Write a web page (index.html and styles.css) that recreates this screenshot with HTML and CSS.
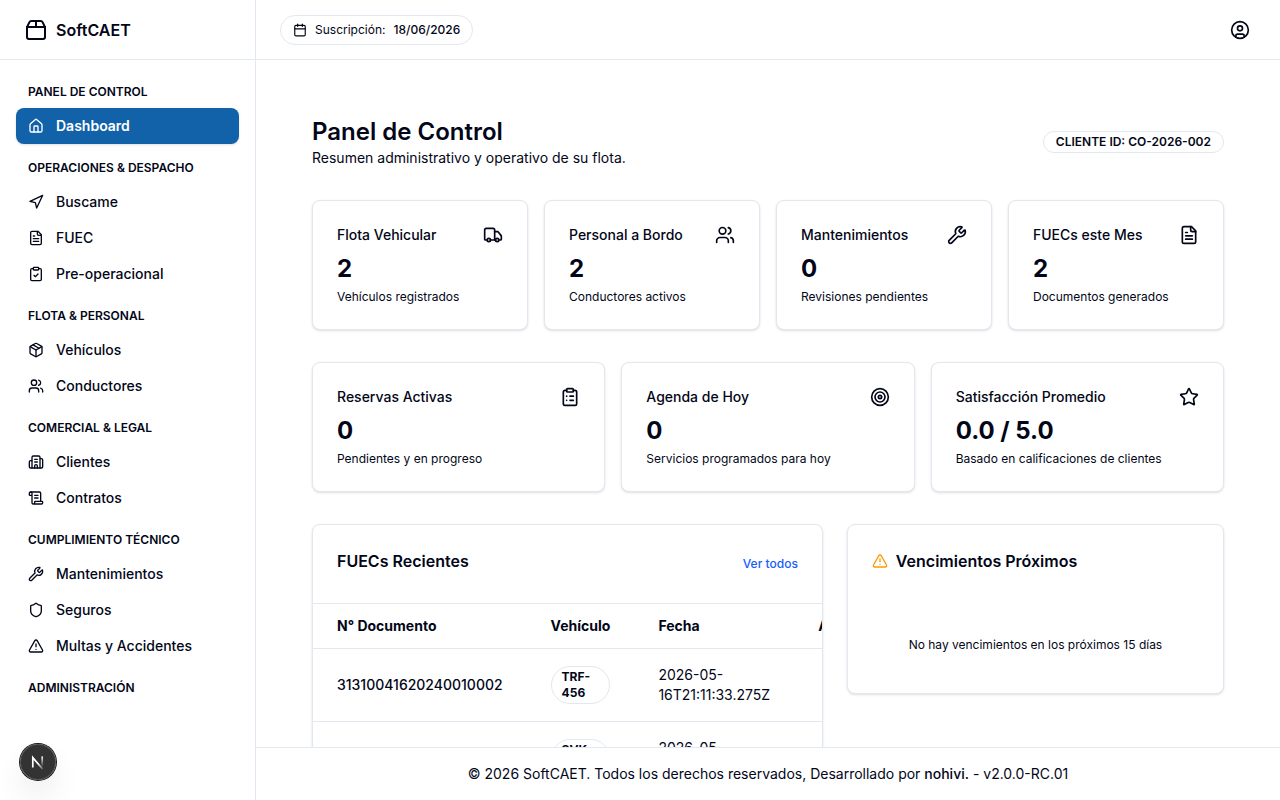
FILE: index.html
```html
<!DOCTYPE html>
<html lang="es">
<head>
    <meta charset="UTF-8">
    <meta name="viewport" content="width=device-width, initial-scale=1.0">
    <title>SoftCAET - Panel de Control</title>
    <link rel="stylesheet" href="styles.css">
</head>
<body>
    <!-- icons -->
    <svg class="sprite" aria-hidden="true">
        <symbol id="i-package" viewBox="0 0 24 24">
            <path d="M12 3v6"/>
            <path d="M16.76 3a2 2 0 0 1 1.8 1.1l2.23 4.479a2 2 0 0 1 .21.891V19a2 2 0 0 1-2 2H5a2 2 0 0 1-2-2V9.472a2 2 0 0 1 .211-.894L5.45 4.1A2 2 0 0 1 7.24 3z"/>
            <path d="M3.054 9.013h17.893"/>
        </symbol>
        <symbol id="i-home" viewBox="0 0 24 24">
            <path d="M15 21v-8a1 1 0 0 0-1-1h-4a1 1 0 0 0-1 1v8"/>
            <path d="M3 10a2 2 0 0 1 .709-1.528l7-5.999a2 2 0 0 1 2.582 0l7 5.999A2 2 0 0 1 21 10v9a2 2 0 0 1-2 2H5a2 2 0 0 1-2-2z"/>
        </symbol>
        <symbol id="i-navigation" viewBox="0 0 24 24">
            <polygon points="3 11 22 2 13 21 11 13 3 11"/>
        </symbol>
        <symbol id="i-file" viewBox="0 0 24 24">
            <path d="M15 2H6a2 2 0 0 0-2 2v16a2 2 0 0 0 2 2h12a2 2 0 0 0 2-2V7Z"/>
            <path d="M14 2v4a2 2 0 0 0 2 2h4"/>
            <path d="M10 9H8"/>
            <path d="M16 13H8"/>
            <path d="M16 17H8"/>
        </symbol>
        <symbol id="i-clipboard-check" viewBox="0 0 24 24">
            <rect width="8" height="4" x="8" y="2" rx="1" ry="1"/>
            <path d="M16 4h2a2 2 0 0 1 2 2v14a2 2 0 0 1-2 2H6a2 2 0 0 1-2-2V6a2 2 0 0 1 2-2h2"/>
            <path d="m9 14 2 2 4-4"/>
        </symbol>
        <symbol id="i-clipboard-list" viewBox="0 0 24 24">
            <rect width="8" height="4" x="8" y="2" rx="1" ry="1"/>
            <path d="M16 4h2a2 2 0 0 1 2 2v14a2 2 0 0 1-2 2H6a2 2 0 0 1-2-2V6a2 2 0 0 1 2-2h2"/>
            <path d="M12 11h4"/>
            <path d="M12 16h4"/>
            <path d="M8 11h.01"/>
            <path d="M8 16h.01"/>
        </symbol>
        <symbol id="i-box" viewBox="0 0 24 24">
            <path d="M11 21.73a2 2 0 0 0 2 0l7-4A2 2 0 0 0 21 16V8a2 2 0 0 0-1-1.73l-7-4a2 2 0 0 0-2 0l-7 4A2 2 0 0 0 3 8v8a2 2 0 0 0 1 1.73z"/>
            <path d="M12 22V12"/>
            <polyline points="3.29 7 12 12 20.71 7"/>
            <path d="m7.5 4.27 9 5.15"/>
        </symbol>
        <symbol id="i-users" viewBox="0 0 24 24">
            <path d="M16 21v-2a4 4 0 0 0-4-4H6a4 4 0 0 0-4 4v2"/>
            <path d="M16 3.128a4 4 0 0 1 0 7.744"/>
            <path d="M22 21v-2a4 4 0 0 0-3-3.87"/>
            <circle cx="9" cy="7" r="4"/>
        </symbol>
        <symbol id="i-building" viewBox="0 0 24 24">
            <path d="M10 12h4"/>
            <path d="M10 8h4"/>
            <path d="M14 21v-3a2 2 0 0 0-4 0v3"/>
            <path d="M6 10H4a2 2 0 0 0-2 2v7a2 2 0 0 0 2 2h16a2 2 0 0 0 2-2V9a2 2 0 0 0-2-2h-2"/>
            <path d="M6 21V5a2 2 0 0 1 2-2h8a2 2 0 0 1 2 2v16"/>
        </symbol>
        <symbol id="i-scroll" viewBox="0 0 24 24">
            <path d="M15 12h-5"/>
            <path d="M15 8h-5"/>
            <path d="M19 17V5a2 2 0 0 0-2-2H4"/>
            <path d="M8 21h12a2 2 0 0 0 2-2v-1a1 1 0 0 0-1-1H11a1 1 0 0 0-1 1v1a2 2 0 1 1-4 0V5a2 2 0 1 0-4 0v2a1 1 0 0 0 1 1h3"/>
        </symbol>
        <symbol id="i-wrench" viewBox="0 0 24 24">
            <path d="M14.7 6.3a1 1 0 0 0 0 1.4l1.6 1.6a1 1 0 0 0 1.4 0l3.106-3.105c.32-.322.863-.22.983.218a6 6 0 0 1-8.259 7.057l-7.91 7.91a1 1 0 0 1-2.999-3l7.91-7.91a6 6 0 0 1 7.057-8.259c.438.12.54.662.219.984z"/>
        </symbol>
        <symbol id="i-shield" viewBox="0 0 24 24">
            <path d="M20 13c0 5-3.5 7.5-7.66 8.95a1 1 0 0 1-.67-.01C7.5 20.5 4 18 4 13V6a1 1 0 0 1 1-1c2 0 4.5-1.2 6.24-2.72a1.17 1.17 0 0 1 1.52 0C14.51 3.81 17 5 19 5a1 1 0 0 1 1 1z"/>
        </symbol>
        <symbol id="i-alert" viewBox="0 0 24 24">
            <path d="m21.73 18-8-14a2 2 0 0 0-3.48 0l-8 14A2 2 0 0 0 4 21h16a2 2 0 0 0 1.73-3"/>
            <path d="M12 9v4"/>
            <path d="M12 17h.01"/>
        </symbol>
        <symbol id="i-calendar" viewBox="0 0 24 24">
            <path d="M8 2v4"/>
            <path d="M16 2v4"/>
            <rect width="18" height="18" x="3" y="4" rx="2"/>
            <path d="M3 10h18"/>
        </symbol>
        <symbol id="i-user-circle" viewBox="0 0 24 24">
            <circle cx="12" cy="12" r="10"/>
            <circle cx="12" cy="10" r="3"/>
            <path d="M7 20.662V19a2 2 0 0 1 2-2h6a2 2 0 0 1 2 2v1.662"/>
        </symbol>
        <symbol id="i-truck" viewBox="0 0 24 24">
            <path d="M14 18V6a2 2 0 0 0-2-2H4a2 2 0 0 0-2 2v11a1 1 0 0 0 1 1h2"/>
            <path d="M15 18H9"/>
            <path d="M19 18h2a1 1 0 0 0 1-1v-3.65a1 1 0 0 0-.22-.624l-3.48-4.35A1 1 0 0 0 17.52 8H14"/>
            <circle cx="17" cy="18" r="2"/>
            <circle cx="7" cy="18" r="2"/>
        </symbol>
        <symbol id="i-target" viewBox="0 0 24 24">
            <circle cx="12" cy="12" r="10"/>
            <circle cx="12" cy="12" r="6"/>
            <circle cx="12" cy="12" r="2"/>
        </symbol>
        <symbol id="i-star" viewBox="0 0 24 24">
            <path d="M11.525 2.295a.53.53 0 0 1 .95 0l2.31 4.679a2.123 2.123 0 0 0 1.595 1.16l5.166.756a.53.53 0 0 1 .294.904l-3.736 3.638a2.123 2.123 0 0 0-.611 1.878l.882 5.14a.53.53 0 0 1-.771.56l-4.618-2.428a2.122 2.122 0 0 0-1.973 0L6.396 21.01a.53.53 0 0 1-.77-.56l.881-5.139a2.122 2.122 0 0 0-.611-1.879L2.16 9.795a.53.53 0 0 1 .294-.906l5.165-.755a2.122 2.122 0 0 0 1.597-1.16z"/>
        </symbol>
    </svg>

    <aside class="sidebar">
        <a href="#" class="brand">
            <svg class="icon icon-lg"><use href="#i-package"/></svg>
            <span>SoftCAET</span>
        </a>
        <nav class="menu">
            <h2>Panel de Control</h2>
            <a href="#" class="active"><svg class="icon"><use href="#i-home"/></svg>Dashboard</a>

            <h2>Operaciones &amp; Despacho</h2>
            <a href="#"><svg class="icon"><use href="#i-navigation"/></svg>Buscame</a>
            <a href="#"><svg class="icon"><use href="#i-file"/></svg>FUEC</a>
            <a href="#"><svg class="icon"><use href="#i-clipboard-check"/></svg>Pre-operacional</a>

            <h2>Flota &amp; Personal</h2>
            <a href="#"><svg class="icon"><use href="#i-box"/></svg>Vehículos</a>
            <a href="#"><svg class="icon"><use href="#i-users"/></svg>Conductores</a>

            <h2>Comercial &amp; Legal</h2>
            <a href="#"><svg class="icon"><use href="#i-building"/></svg>Clientes</a>
            <a href="#"><svg class="icon"><use href="#i-scroll"/></svg>Contratos</a>

            <h2>Cumplimiento Técnico</h2>
            <a href="#"><svg class="icon"><use href="#i-wrench"/></svg>Mantenimientos</a>
            <a href="#"><svg class="icon"><use href="#i-shield"/></svg>Seguros</a>
            <a href="#"><svg class="icon"><use href="#i-alert"/></svg>Multas y Accidentes</a>

            <h2>Administración</h2>
        </nav>
    </aside>

    <div class="page">
        <header class="topbar">
            <div class="subscription">
                <svg class="icon icon-sm"><use href="#i-calendar"/></svg>
                <span>Suscripción:</span>
                <strong>18/06/2026</strong>
            </div>
            <button type="button" class="user-btn" aria-label="Cuenta">
                <svg class="icon icon-md"><use href="#i-user-circle"/></svg>
            </button>
        </header>

        <main class="content">
            <div class="heading">
                <div>
                    <h1>Panel de Control</h1>
                    <p>Resumen administrativo y operativo de su flota.</p>
                </div>
                <span class="client-id">CLIENTE ID: CO-2026-002</span>
            </div>

            <section class="stats four">
                <div class="card stat">
                    <div class="stat-top"><h3>Flota Vehicular</h3><svg class="icon icon-md"><use href="#i-truck"/></svg></div>
                    <div class="value">2</div>
                    <p>Vehículos registrados</p>
                </div>
                <div class="card stat">
                    <div class="stat-top"><h3>Personal a Bordo</h3><svg class="icon icon-md"><use href="#i-users"/></svg></div>
                    <div class="value">2</div>
                    <p>Conductores activos</p>
                </div>
                <div class="card stat">
                    <div class="stat-top"><h3>Mantenimientos</h3><svg class="icon icon-md"><use href="#i-wrench"/></svg></div>
                    <div class="value">0</div>
                    <p>Revisiones pendientes</p>
                </div>
                <div class="card stat">
                    <div class="stat-top"><h3>FUECs este Mes</h3><svg class="icon icon-md"><use href="#i-file"/></svg></div>
                    <div class="value">2</div>
                    <p>Documentos generados</p>
                </div>
            </section>

            <section class="stats three">
                <div class="card stat">
                    <div class="stat-top"><h3>Reservas Activas</h3><svg class="icon icon-md"><use href="#i-clipboard-list"/></svg></div>
                    <div class="value">0</div>
                    <p>Pendientes y en progreso</p>
                </div>
                <div class="card stat">
                    <div class="stat-top"><h3>Agenda de Hoy</h3><svg class="icon icon-md"><use href="#i-target"/></svg></div>
                    <div class="value">0</div>
                    <p>Servicios programados para hoy</p>
                </div>
                <div class="card stat">
                    <div class="stat-top"><h3>Satisfacción Promedio</h3><svg class="icon icon-md"><use href="#i-star"/></svg></div>
                    <div class="value">0.0 / 5.0</div>
                    <p>Basado en calificaciones de clientes</p>
                </div>
            </section>

            <section class="panels">
                <div class="card recent">
                    <div class="card-head">
                        <h3>FUECs Recientes</h3>
                        <a href="#">Ver todos</a>
                    </div>
                    <div class="table-wrap">
                        <table>
                            <thead>
                                <tr><th>N° Documento</th><th>Vehículo</th><th>Fecha</th><th>Acciones</th></tr>
                            </thead>
                            <tbody>
                                <tr>
                                    <td class="doc">31310041620240010002</td>
                                    <td><span class="plate">TRF-456</span></td>
                                    <td>2026-05-16T21:11:33.275Z</td>
                                    <td></td>
                                </tr>
                                <tr>
                                    <td class="doc">31310041620240010001</td>
                                    <td><span class="plate">SVK-123</span></td>
                                    <td>2026-05-16T21:11:10.211Z</td>
                                    <td></td>
                                </tr>
                            </tbody>
                        </table>
                    </div>
                </div>

                <div class="card expiring">
                    <div class="card-head">
                        <h3><svg class="icon warn"><use href="#i-alert"/></svg>Vencimientos Próximos</h3>
                    </div>
                    <p class="empty">No hay vencimientos en los próximos 15 días</p>
                </div>
            </section>
        </main>

        <footer class="footer">
            <p>© 2026 SoftCAET. Todos los derechos reservados, Desarrollado por <a href="#">nohivi.</a> - v2.0.0-RC.01</p>
        </footer>
    </div>

    <button type="button" class="dev-btn" aria-label="Herramientas de desarrollo">
        <svg width="40" height="40" viewBox="0 0 40 40" fill="none">
            <defs>
                <linearGradient id="fade-diagonal" x1="21" y1="21" x2="25" y2="27" gradientUnits="userSpaceOnUse">
                    <stop stop-color="#fff"/>
                    <stop offset="1" stop-color="#fff" stop-opacity="0.2"/>
                </linearGradient>
                <linearGradient id="fade-stem" x1="24" y1="14" x2="24" y2="25" gradientUnits="userSpaceOnUse">
                    <stop stop-color="#fff"/>
                    <stop offset="1" stop-color="#fff" stop-opacity="0"/>
                </linearGradient>
            </defs>
            <path d="M14.8 25.6V15.6L24.6 27" stroke="url(#fade-diagonal)" stroke-width="1.7"/>
            <path d="M24.2 14.4V25" stroke="url(#fade-stem)" stroke-width="1.7"/>
        </svg>
    </button>
</body>
</html>
```
FILE: styles.css
```css
* {
    box-sizing: border-box;
    margin: 0;
    padding: 0;
}
body {
    display: flex;
    height: 100vh;
    overflow: hidden;
    font-family: Inter, "Liberation Sans", sans-serif;
    font-size: 14px;
    line-height: 20px;
    color: #020618;
    background: #fff;
}
a {
    color: inherit;
    text-decoration: none;
}
button {
    border: none;
    background: none;
    color: inherit;
    cursor: pointer;
}
.sprite {
    display: none;
}
.icon {
    width: 16px;
    height: 16px;
    flex-shrink: 0;
    fill: none;
    stroke: currentColor;
    stroke-width: 2;
    stroke-linecap: round;
    stroke-linejoin: round;
}
.icon-sm {
    width: 14px;
    height: 14px;
}
.icon-md {
    width: 20px;
    height: 20px;
}
.icon-lg {
    width: 24px;
    height: 24px;
}

/* sidebar */
.sidebar {
    display: flex;
    flex-direction: column;
    width: 256px;
    flex-shrink: 0;
    border-right: 1px solid #e2e8f0;
}
.brand {
    display: flex;
    align-items: center;
    gap: 8px;
    height: 60px;
    flex-shrink: 0;
    padding: 0 24px;
    border-bottom: 1px solid #e2e8f0;
    font-size: 16px;
    font-weight: 600;
}
.menu {
    flex: 1;
    padding: 8px 16px;
    overflow-y: auto;
    scrollbar-width: none;
}
.menu h2 {
    padding: 16px 12px 8px;
    font-size: 12px;
    line-height: 16px;
    font-weight: 600;
    text-transform: uppercase;
}
.menu a {
    display: flex;
    align-items: center;
    gap: 12px;
    padding: 8px 12px;
    border-radius: 8px;
    font-weight: 500;
}
.menu a.active {
    background: #1262a9;
    color: #fff;
    font-weight: 600;
    box-shadow: 0 1px 3px rgba(0, 0, 0, 0.1), 0 1px 2px -1px rgba(0, 0, 0, 0.1);
}

/* top bar */
.page {
    display: flex;
    flex-direction: column;
    flex: 1;
    min-width: 0;
}
.topbar {
    display: flex;
    align-items: center;
    justify-content: space-between;
    height: 60px;
    flex-shrink: 0;
    padding: 0 24px;
    border-bottom: 1px solid #e2e8f0;
}
.subscription {
    display: flex;
    align-items: center;
    gap: 8px;
    padding: 6px 12px;
    border: 1px solid #e2e8f0;
    border-radius: 999px;
    font-size: 12px;
    line-height: 16px;
}
.subscription strong {
    font-weight: 500;
}
.user-btn {
    display: flex;
    align-items: center;
    justify-content: center;
    width: 32px;
    height: 32px;
    border-radius: 50%;
}

/* content */
.content {
    display: flex;
    flex-direction: column;
    gap: 32px;
    flex: 1;
    min-height: 0;
    padding: 56px;
    overflow-y: auto;
    scrollbar-width: none;
}
.heading {
    display: flex;
    align-items: center;
    justify-content: space-between;
}
.heading h1 {
    font-size: 24px;
    line-height: 32px;
    font-weight: 600;
}
.client-id {
    padding: 2px 12px;
    border: 1px solid #e2e8f0;
    border-radius: 999px;
    font-size: 12px;
    line-height: 16px;
    font-weight: 600;
}
.card {
    border: 1px solid #e2e8f0;
    border-radius: 8px;
    background: #fff;
    box-shadow: 0 1px 3px rgba(0, 0, 0, 0.1), 0 1px 2px -1px rgba(0, 0, 0, 0.1);
}
.stats {
    display: grid;
    gap: 16px;
}
.four {
    grid-template-columns: repeat(4, 1fr);
}
.three {
    grid-template-columns: repeat(3, 1fr);
}
.stat {
    padding: 24px;
}
.stat-top {
    display: flex;
    align-items: center;
    justify-content: space-between;
    margin-bottom: 8px;
}
.stat-top h3 {
    font-size: 14px;
    font-weight: 500;
}
.value {
    font-size: 24px;
    line-height: 32px;
    font-weight: 700;
}
.stat p {
    margin-top: 4px;
    font-size: 12px;
    line-height: 16px;
}

/* bottom panels */
.panels {
    display: grid;
    grid-template-columns: repeat(7, 1fr);
    gap: 24px;
    align-items: start;
}
.recent {
    grid-column: span 4;
    min-width: 0;
    overflow: hidden;
}
.expiring {
    grid-column: span 3;
}
.card-head {
    display: flex;
    justify-content: space-between;
    padding: 24px;
}
.card-head h3 {
    display: flex;
    align-items: center;
    align-self: flex-start;
    gap: 8px;
    font-size: 16px;
    line-height: 24px;
    font-weight: 600;
}
.card-head a {
    font-size: 12px;
    line-height: 30px;
    font-weight: 500;
    color: #155dfc;
}
.warn {
    color: #fe9a00;
}
.table-wrap {
    overflow-x: auto;
    border-top: 1px solid #e2e8f0;
}
table {
    width: 100%;
    border-collapse: collapse;
    text-align: left;
}
th {
    padding: 12px 24px;
    font-weight: 700;
}
td {
    padding: 16px 24px;
}
tr {
    border-bottom: 1px solid #e2e8f0;
}
.doc {
    font-weight: 500;
}
.plate {
    display: inline-block;
    width: 100%;
    padding: 2px 10px;
    border: 1px solid #e2e8f0;
    border-radius: 999px;
    font-size: 12px;
    line-height: 16px;
    font-weight: 700;
    vertical-align: middle;
}
.empty {
    padding: 40px 24px;
    font-size: 12px;
    line-height: 16px;
    text-align: center;
}

.footer {
    flex-shrink: 0;
    padding: 16px 24px;
    border-top: 1px solid #e2e8f0;
    text-align: center;
}
.footer a {
    font-weight: 500;
}

/* floating button over the sidebar */
.dev-btn {
    position: fixed;
    left: 20px;
    bottom: 20px;
    display: flex;
    align-items: center;
    justify-content: center;
    width: 36px;
    height: 36px;
    border-radius: 50%;
    background: rgba(0, 0, 0, 0.8);
    box-shadow: 0 0 0 1px #171717, inset 0 0 0 1px rgba(255, 255, 255, 0.14), 0 16px 32px -8px rgba(0, 0, 0, 0.24);
}
.dev-btn svg {
    flex-shrink: 0;
}
```
